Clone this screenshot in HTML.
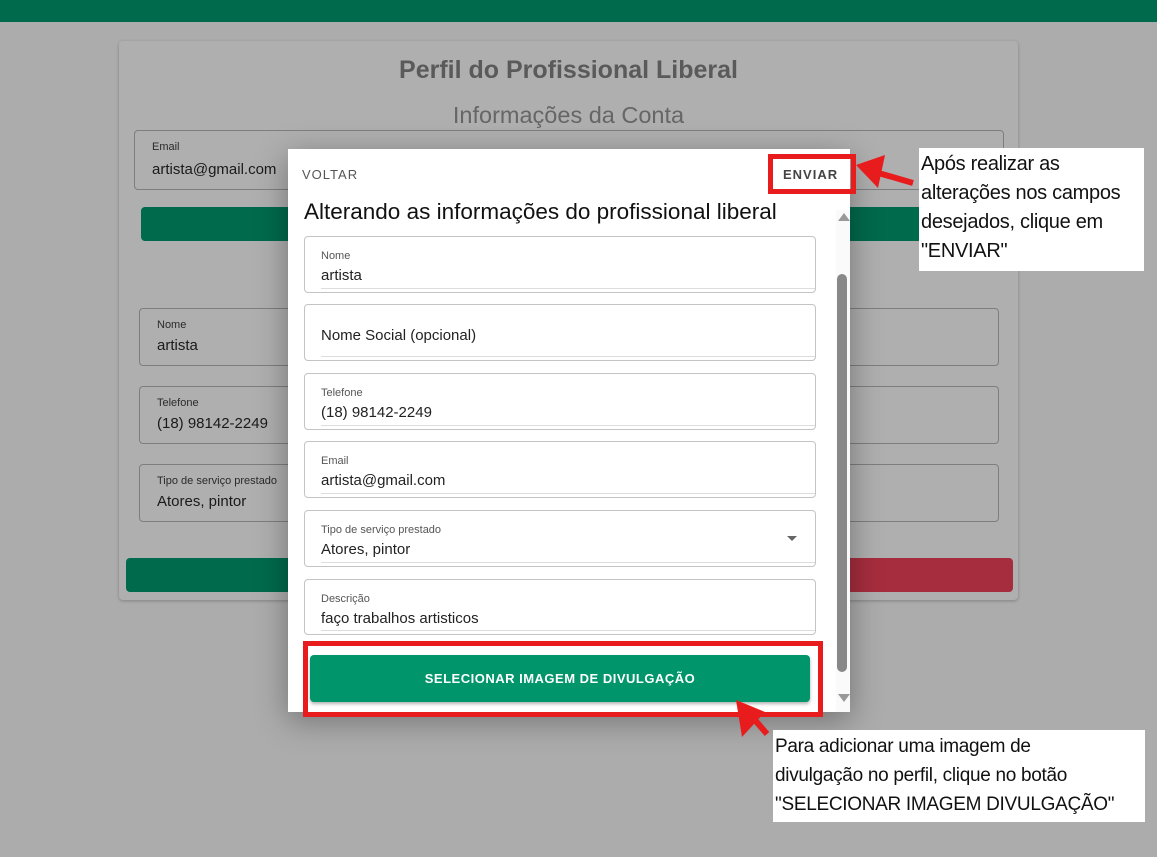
<!DOCTYPE html>
<html><head><meta charset="utf-8"><style>
*{box-sizing:border-box;margin:0;padding:0}
body{width:1157px;height:857px;background:#acacac;font-family:"Liberation Sans",sans-serif;position:relative;overflow:hidden}
.a{position:absolute}
.bf{position:absolute;border:1px solid #7e7e7e;border-radius:4px}
.bf .l{position:absolute;left:17px;top:10px;font-size:11px;color:#2a2a2a}
.bf .v{position:absolute;left:17px;top:28px;font-size:15px;color:#1a1a1a}
.f{position:absolute;left:16px;width:512px;height:57px;border:1px solid #c4c4c4;border-radius:4px;background:#fff}
.f .l{position:absolute;left:16px;top:13px;font-size:11px;color:#555}
.f .v{position:absolute;left:16px;top:30px;font-size:15px;color:#222}
.f .u{position:absolute;left:16px;right:0;bottom:3px;border-bottom:1px solid #ddd}
.note{position:absolute;background:#fff;font-size:20px;line-height:29px;color:#111;padding:2px 2px;white-space:nowrap;letter-spacing:-0.3px}
</style></head><body>
<div class="a" style="left:0;top:0;width:1157px;height:22px;background:#006a4c"></div>
<div class="a" style="left:119px;top:41px;width:899px;height:559px;background:#afafaf;border-radius:4px;box-shadow:0 1px 3px rgba(0,0,0,.25)"></div>
<div class="a" style="left:119px;top:56px;width:899px;text-align:center;font-size:25px;font-weight:bold;color:#5a5a5a">Perfil do Profissional Liberal</div>
<div class="a" style="left:119px;top:102px;width:899px;text-align:center;font-size:23.5px;color:#666">Informações da Conta</div>
<div class="bf" style="left:134px;top:130px;width:870px;height:60px"><div class="l">Email</div><div class="v" style="top:30px">artista@gmail.com</div></div>
<div class="a" style="left:141px;top:207px;width:860px;height:34px;background:#006a4c;border-radius:4px"></div>
<div class="bf" style="left:139px;top:308px;width:860px;height:58px"><div class="l">Nome</div><div class="v">artista</div></div>
<div class="bf" style="left:139px;top:386px;width:860px;height:58px"><div class="l">Telefone</div><div class="v">(18) 98142-2249</div></div>
<div class="bf" style="left:139px;top:464px;width:860px;height:58px"><div class="l">Tipo de serviço prestado</div><div class="v">Atores, pintor</div></div>
<div class="a" style="left:126px;top:558px;width:440px;height:34px;background:#006a4c;border-radius:4px"></div>
<div class="a" style="left:566px;top:558px;width:447px;height:34px;background:#a62d3e;border-radius:4px"></div>

<div class="a" style="left:288px;top:149px;width:562px;height:563px;background:#fff;box-shadow:0 8px 30px rgba(0,0,0,.35)">
 <div class="a" style="left:14px;top:18px;font-size:13px;letter-spacing:1px;color:#555">VOLTAR</div>
 <div class="a" style="left:495px;top:18px;font-size:13px;font-weight:bold;letter-spacing:1px;color:#444">ENVIAR</div>
 <div class="a" style="left:16px;top:50px;font-size:22.5px;color:#111">Alterando as informações do profissional liberal</div>
 <div class="f" style="top:87px"><div class="l">Nome</div><div class="v">artista</div><div class="u"></div></div>
 <div class="f" style="top:155px"><div class="v" style="top:22px">Nome Social (opcional)</div><div class="u"></div></div>
 <div class="f" style="top:224px"><div class="l">Telefone</div><div class="v">(18) 98142-2249</div><div class="u"></div></div>
 <div class="f" style="top:292px"><div class="l">Email</div><div class="v">artista@gmail.com</div><div class="u"></div></div>
 <div class="f" style="top:361px"><div class="l">Tipo de serviço prestado</div><div class="v">Atores, pintor</div><div class="u"></div>
  <div class="a" style="right:18px;top:25px;width:0;height:0;border-left:5px solid transparent;border-right:5px solid transparent;border-top:5px solid #666"></div></div>
 <div class="f" style="top:430px;height:56px"><div class="l">Descrição</div><div class="v">faço trabalhos artisticos</div><div class="u"></div></div>
 <div class="a" style="left:22px;top:506px;width:500px;height:47px;background:#00956b;border-radius:4px;box-shadow:0 2px 3px rgba(0,0,0,.3);color:#fff;font-size:13px;font-weight:bold;text-align:center;line-height:47px;letter-spacing:.5px">SELECIONAR IMAGEM DE DIVULGAÇÃO</div>
 <div class="a" style="left:548px;top:61px;width:14px;height:502px;background:#fafafa"></div>
 <div class="a" style="left:550px;top:64px;width:0;height:0;border-left:6px solid transparent;border-right:6px solid transparent;border-bottom:8px solid #999"></div>
 <div class="a" style="left:550px;top:545px;width:0;height:0;border-left:6px solid transparent;border-right:6px solid transparent;border-top:8px solid #999"></div>
 <div class="a" style="left:549px;top:125px;width:10px;height:398px;background:#888;border-radius:5px"></div>
</div>

<div class="a" style="left:768px;top:154px;width:88px;height:40px;border:5px solid #e81c1c"></div>
<div class="a" style="left:303px;top:641px;width:520px;height:76px;border:5px solid #e81c1c"></div>
<svg class="a" style="left:0;top:0" width="1157" height="857">
 <line x1="913" y1="183" x2="875" y2="172" stroke="#e81c1c" stroke-width="6"/>
 <polygon points="856,165 885,155 878,188" fill="#e81c1c"/>
 <line x1="767" y1="734" x2="748" y2="712" stroke="#e81c1c" stroke-width="6"/>
 <polygon points="736,700 765,712 742,737" fill="#e81c1c"/>
</svg>
<div class="note" style="left:919px;top:148px;width:225px;height:123px">Após realizar as<br>alterações nos campos<br>desejados, clique em<br>"ENVIAR"</div>
<div class="note" style="left:773px;top:730px;width:372px;height:92px;font-size:19px;line-height:29px">Para adicionar uma imagem de<br>divulgação no perfil, clique no botão<br>"SELECIONAR IMAGEM DIVULGAÇÃO"</div>
</body></html>
